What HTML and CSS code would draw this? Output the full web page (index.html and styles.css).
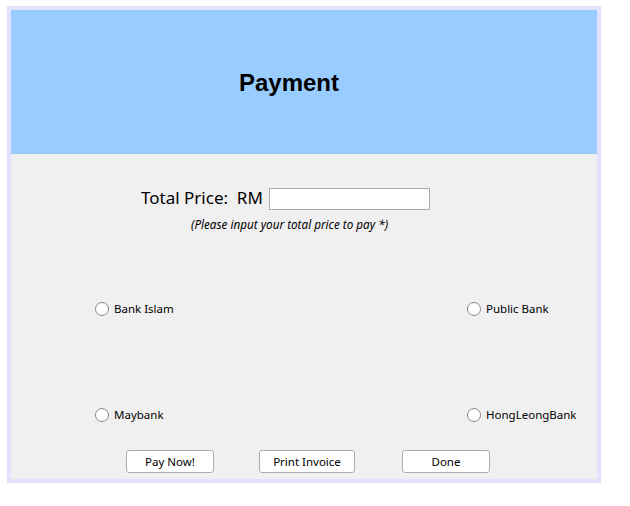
FILE: index.html
```html
<!DOCTYPE html>
<html>
<head>
<meta charset="utf-8">
<link rel="stylesheet" href="styles.css">
</head>
<body>
<div class="frame">
  <div class="header"><h1 class="title">Payment</h1></div>
  <div class="content">
    <div class="price-row">
      <span class="price-label">Total Price:&nbsp; RM</span>
      <input class="price-input" type="text">
    </div>
    <div class="hint">(Please input your total price to pay *)</div>
    <div class="radios">
      <label class="radio"><span class="dot"></span>Bank Islam</label>
      <label class="radio"><span class="dot"></span>Public Bank</label>
      <label class="radio"><span class="dot"></span>Maybank</label>
      <label class="radio"><span class="dot"></span>HongLeongBank</label>
    </div>
    <div class="buttons">
      <button class="btn btn-pay">Pay Now!</button>
      <button class="btn btn-print">Print Invoice</button>
      <button class="btn btn-done">Done</button>
    </div>
  </div>
</div>
</body>
</html>
```
FILE: styles.css
```css
html, body {
  margin: 0;
  padding: 0;
  background: #ffffff;
}
.frame {
  margin: 6px 0 0 7px;
  width: 586px;
  border: 4px solid #e2e2fa;
  font-family: "Noto Sans", "Open Sans", sans-serif;
  color: #000;
}
.header {
  height: 144px;
  background: #99ccff;
  display: flex;
  align-items: center;
  justify-content: center;
}
.title {
  margin: 0 30px 0 0;
  font-family: "Liberation Sans", Arial, sans-serif;
  font-weight: bold;
  font-size: 24px;
  line-height: 28px;
  padding-top: 2px;
}
.content {
  height: 325px;
  background: #f0f0f0;
  box-sizing: border-box;
  padding-top: 34px;
  display: flex;
  flex-direction: column;
}
.price-row {
  display: flex;
  align-items: center;
  padding-left: 130px;
  height: 22px;
}
.price-label {
  font-size: 17px;
  line-height: 22px;
  padding-bottom: 3px;
  margin-right: 6px;
}
.price-input {
  box-sizing: border-box;
  width: 161px;
  height: 22px;
  margin: 0;
  border: 1px solid #ababab;
  background: #fff;
  padding: 0 3px;
}
.hint {
  margin-top: 6px;
  padding-left: 180px;
  font-size: 11.7px;
  line-height: 16px;
  font-style: italic;
}
.radios {
  margin-top: 69px;
  padding-left: 84px;
  display: grid;
  grid-template-columns: 372px auto;
  row-gap: 90px;
}
.radio {
  display: flex;
  align-items: center;
  font-size: 11.5px;
  line-height: 16px;
  height: 16px;
}
.dot {
  box-sizing: border-box;
  width: 14px;
  height: 14px;
  border: 1px solid #888888;
  border-radius: 50%;
  background: #ffffff;
  margin-right: 5px;
}
.buttons {
  margin-top: 27px;
  padding-left: 115px;
  display: flex;
  gap: 45px;
}
.btn {
  box-sizing: border-box;
  height: 23px;
  width: 88px;
  margin: 0;
  padding: 0;
  background: #ffffff;
  border: 1px solid #adadad;
  border-radius: 3px;
  font-family: "Noto Sans", "Open Sans", sans-serif;
  font-size: 11.5px;
  color: #000;
}
.btn-print {
  width: 96px;
}
.btn-done {
  margin-left: 2px;
}
```
